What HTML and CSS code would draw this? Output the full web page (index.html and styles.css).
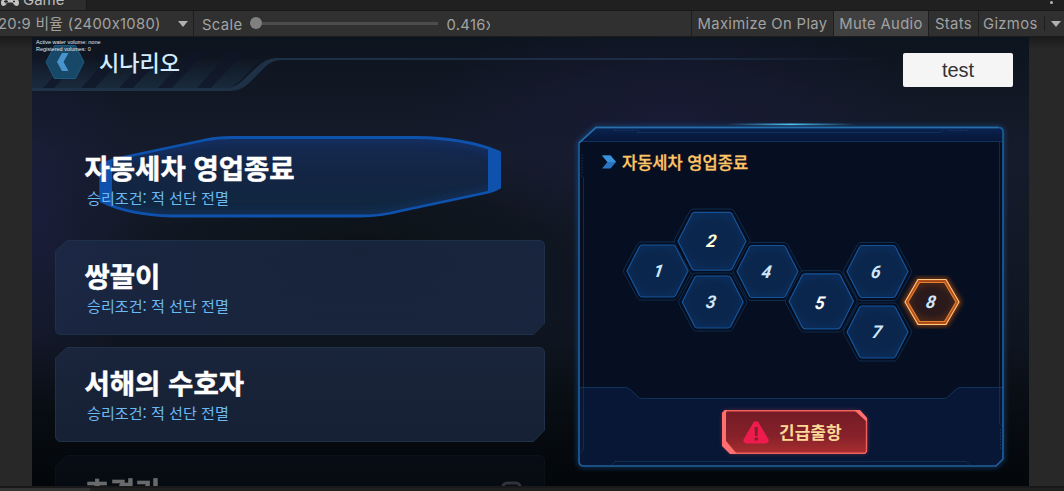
FILE: index.html
```html
<!DOCTYPE html>
<html lang="ko">
<head>
    <meta charset="UTF-8">
    <meta name="viewport" content="width=device-width, initial-scale=1.0">
    <title>시나리오</title>
    <link rel="stylesheet" href="styles.css">
</head>
<body>
    <div class="tabs">
        <div class="tab">
            <svg width="20" height="12" viewBox="0 0 20 12"><path d="M6 0h8c3 0 5 2 5 5s-3 4-5 1.500l-1.500-2h-5L6 6.500C4 9 1 8 1 5s2-5 5-5z" fill="#c4c4c4" transform="translate(0 -2)"/><path d="M4 1.500h4M6 0v3.500M13 1.500h2" stroke="#2d2d2d" stroke-width="1.300"/></svg>
            <span>Game</span>
        </div>
        <i class="kebab"></i>
    </div>

    <div class="toolbar">
        <div class="tool ratio"><span>20:9 비율 (2400x1080)</span><i class="arrow"></i></div>
        <div class="tool scale">
            <span>Scale</span>
            <div class="slider"><i class="knob"></i></div>
            <span class="value">0.416x</span>
        </div>
        <div class="tool maximize">Maximize On Play</div>
        <div class="tool mute">Mute Audio</div>
        <div class="tool stats">Stats</div>
        <div class="tool gizmos"><span>Gizmos</span><i class="split"></i><i class="arrow"></i></div>
    </div>

    <div class="viewport">
        <div class="game">
            <header class="header">
                <svg class="header-art" width="997" height="60" viewBox="32 37 997 60">
                    <defs>
                        <linearGradient id="band" x1="0" y1="0" x2="0" y2="1">
                            <stop offset="0.200" stop-color="#1b2f42" stop-opacity="0"/>
                            <stop offset="1" stop-color="#1b2f42" stop-opacity="0.800"/>
                        </linearGradient>
                        <linearGradient id="rail" gradientUnits="userSpaceOnUse" x1="32" y1="0" x2="892" y2="0">
                            <stop offset="0" stop-color="#1e3347"/>
                            <stop offset="0.750" stop-color="#1c2c45"/>
                            <stop offset="1" stop-color="#1c2c45" stop-opacity="0"/>
                        </linearGradient>
                    </defs>
                    <path d="M32 50H272L250 70Q236 88 225 88H32z" fill="url(#band)"/>
                    <path d="M43 88l33-36h11L54 88zM81 88l33-36h14L95 88zM119 88l33-36h14l-33 36zM158 88l33-36h14l-33 36zM197 88l33-36h14l-33 36z" fill="#101627" opacity=".7"/>
                    <path d="M32 88H224Q234 88 241 82L257 67Q266 58 277 58H892V60H281Q272 60 264 68L249 83Q241 91 229 91H32z" fill="url(#rail)"/>
                </svg>
                <div class="debug">Active water volume: none<br>Registered volumes: 0</div>
                <div class="title-row">
                    <svg class="back" width="40" height="36" viewBox="0 0 40 36">
                        <path d="M9.500 1.500h21L39 18l-8.500 16.500h-21L1 18z" fill="#184868" stroke="#1d5a80"/>
                        <path d="M17 9h6.500l-5 9 5 9H17l-5-9z" fill="#4994cc"/>
                    </svg>
                    <h1>시나리오</h1>
                    <button class="test">test</button>
                </div>
            </header>

            <main class="content">
                <section class="missions">
                    <article class="mission selected">
                        <svg class="frame" width="490" height="95" viewBox="55 132 490 95">
                            <defs>
                                <linearGradient id="sel" x1="0" y1="0" x2="0" y2="1">
                                    <stop offset="0" stop-color="#142a54"/>
                                    <stop offset="0.500" stop-color="#132543"/>
                                    <stop offset="1" stop-color="#10283f"/>
                                </linearGradient>
                                <filter id="soft" x="-5%" y="-10%" width="110%" height="120%"><feGaussianBlur stdDeviation="5"/></filter>
                                <clipPath id="selClip"><use href="#selShape"/></clipPath>
                                <path id="selShape" d="M101 165Q108 161 120 158L205 140Q216 137.500 232 137.500H415Q466 138 499 152V188Q495 191 480 194L400 211Q382 216 360 216H172Q128 215 101 201z"/>
                            </defs>
                            <use href="#selShape" fill="url(#sel)"/>
                            <g clip-path="url(#selClip)"><use href="#selShape" fill="none" stroke="#1448a0" stroke-width="7" opacity=".35" filter="url(#soft)"/></g>
                            <use href="#selShape" fill="none" stroke="#0f52ae" stroke-width="2.800"/>
                            <path d="M99.500 164l12.500-5v46l-12.500-6zM488 147l13 5V188l-13 5z" fill="#0f52ae"/>
                        </svg>
                        <div class="mission-text"><h2>자동세차 영업종료</h2><p>승리조건: 적 선단 전멸</p></div>
                    </article>
                    <article class="mission">
                        <svg class="frame" width="490" height="95" viewBox="0 0 490 95"><path class="card-shape" d="M12 .500H484Q489.500.500 489.500 6V83L478.500 94.500H6Q.500 94.500.500 89V11z"/></svg>
                        <div class="mission-text"><h2>쌍끌이</h2><p>승리조건: 적 선단 전멸</p></div>
                    </article>
                    <article class="mission">
                        <svg class="frame" width="490" height="95" viewBox="0 0 490 95"><path class="card-shape" d="M12 .500H484Q489.500.500 489.500 6V83L478.500 94.500H6Q.500 94.500.500 89V11z"/></svg>
                        <div class="mission-text"><h2>서해의 수호자</h2><p>승리조건: 적 선단 전멸</p></div>
                    </article>
                    <article class="mission faded">
                        <svg class="frame" width="490" height="95" viewBox="0 0 490 95">
                            <path class="card-shape" d="M12 .500H484Q489.500.500 489.500 6V83L478.500 94.500H6Q.500 94.500.500 89V11z"/>
                            <rect x="448" y="28" width="17" height="16" rx="4" fill="none" stroke="#77728a" stroke-width="3"/>
                        </svg>
                        <div class="mission-text"><h2>추격기</h2></div>
                    </article>
                </section>

                <section class="panel">
                    <svg class="frame" width="440" height="356" viewBox="571 117 440 356">
                        <defs>
                            <filter id="glow" x="-10%" y="-10%" width="120%" height="120%"><feGaussianBlur stdDeviation="2.500"/></filter>
                            <linearGradient id="head" x1="0" y1="0" x2="0" y2="1">
                                <stop offset="0" stop-color="#0a2350"/>
                                <stop offset="1" stop-color="#071638"/>
                            </linearGradient>
                            <linearGradient id="flare">
                                <stop offset="0" stop-color="#42b4ee" stop-opacity="0"/>
                                <stop offset="0.500" stop-color="#4fc2f5"/>
                                <stop offset="1" stop-color="#42b4ee" stop-opacity="0"/>
                            </linearGradient>
                            <path id="outline" d="M596 127.500H998Q1003 127.500 1003 132V459L996 466H584Q579 466 579 461V143z"/>
                        </defs>
                        <use href="#outline" fill="none" stroke="#1b61ac" stroke-width="4" opacity=".5" filter="url(#glow)"/>
                        <use href="#outline" fill="#060f21"/>
                        <path d="M596 128H998Q1002 128 1002 132V141H581z" fill="url(#head)"/>
                        <path d="M579 387H625Q628 387 631 390L637 396Q639 398.500 642 398.500H944Q947 398.500 949 396L955 390Q958 387 961 387H1003V459L996 466H584Q579 466 579 461z" fill="#071735"/>
                        <path d="M580 387.500H625Q628 387.500 631 390L637 396Q639 398.500 642 398.500H944Q947 398.500 949 396L955 390Q958 387.500 961 387.500H1002M581 141.500H1002" fill="none" stroke="#10315a"/>
                        <path d="M583.500 449V178l-3-3M999.500 142V423l3 3M583.500 449l-3 4M636 132.500H940l4-3M640 132.500l-4-3M612 465l3-3.500H966l4 3.500" fill="none" stroke="#12365f" opacity=".7"/>
                        <path d="M614 130.500H634M948 130.500H969M582 154V174M1000.500 429V449" stroke="#1b456f" stroke-dasharray="2 1" opacity=".55"/>
                        <use href="#outline" fill="none" stroke="#1f5f9c" stroke-width="1.600"/>
                        <path d="M579 143L596 127.500H998" fill="none" stroke="#2670ab" stroke-width="1.300"/>
                        <rect x="727" y="123.500" width="128" height="1.700" fill="url(#flare)"/>
                    </svg>
                    <div class="panel-body">
                        <div class="panel-title">
                            <svg width="14" height="14" viewBox="0 0 14 14"><path d="M0 .500h8.500L14 7l-5.500 6.500H0L5.500 7z" fill="#2a74c4"/><path d="M0 .500h8.500L14 7H5.500z" fill="#3a91dc"/></svg>
                            <h3>자동세차 영업종료</h3>
                        </div>
                        <svg class="map" width="424" height="200" viewBox="579 187 424 200">
                            <defs>
                                <symbol id="hex" viewBox="-35 -31 70 62" overflow="visible">
                                    <path d="M-16.500-29H16.500Q18.500-29 20-27L33.500-2Q34.500 0 33.500 2L20 27Q18.500 29 16.500 29H-16.500Q-18.500 29-20 27L-33.500 2Q-34.500 0-33.500-2L-20-27Q-18.500-29-16.500-29z" fill="#050e20" stroke="#0f2b4d" vector-effect="non-scaling-stroke"/>
                                    <path d="M-15.500-26H15.500Q17-26 18-24.500L30.500 0 18 24.500Q17 26 15.500 26H-15.500Q-17 26-18 24.500L-30.500 0-18-24.500Q-17-26-15.500-26z" fill="url(#cell)" stroke="#15549a" stroke-width="1.200" vector-effect="non-scaling-stroke"/>
                                </symbol>
                                <radialGradient id="cell">
                                    <stop offset="0.700" stop-color="#0a264c"/>
                                    <stop offset="1" stop-color="#0b2b57"/>
                                </radialGradient>
                                <radialGradient id="ember">
                                    <stop offset="0.600" stop-color="#2a1a1c"/>
                                    <stop offset="1" stop-color="#4e2816"/>
                                </radialGradient>
                            </defs>
                            <use href="#hex" x="622.500" y="240" width="70" height="62"/>
                            <use href="#hex" x="673" y="206.300" width="78" height="70"/>
                            <use href="#hex" x="677.700" y="271" width="70" height="62"/>
                            <use href="#hex" x="732.500" y="240.500" width="70" height="62"/>
                            <use href="#hex" x="784.300" y="268.300" width="74" height="66"/>
                            <use href="#hex" x="842.500" y="240.500" width="70" height="62"/>
                            <use href="#hex" x="842.500" y="301" width="70" height="62"/>
                            <g transform="translate(932 302)">
                                <path d="M-14-22H14L27 0 14 22H-14L-27 0z" fill="none" stroke="#e0600f" stroke-width="4" opacity=".7" filter="url(#glow)"/>
                                <path d="M-13.500-21.500H13.500L26 0 13.500 21.500H-13.500L-26 0z" fill="url(#ember)" stroke="#b8501a" stroke-width="2.500"/>
                                <path d="M-14-22.500H14L27 0 14 22.500H-14L-27 0z" fill="none" stroke="#ffc681" stroke-width="1.100"/>
                                <path d="M-12.500-19.500H12.500L24 0 12.500 19.500H-12.500L-24 0z" fill="none" stroke="#ea822f" stroke-width="1.200"/>
                            </g>
                            <g class="numbers">
                                <text transform="translate(657.500 277) skewX(-9)">1</text>
                                <text transform="translate(710.500 247) skewX(-9)" class="cream">2</text>
                                <text transform="translate(710 308) skewX(-9)">3</text>
                                <text transform="translate(765.500 278) skewX(-9)">4</text>
                                <text transform="translate(819 309) skewX(-9)" class="white">5</text>
                                <text transform="translate(875 278) skewX(-9)">6</text>
                                <text transform="translate(876 338) skewX(-9)">7</text>
                                <text transform="translate(930 308) skewX(-9)">8</text>
                            </g>
                        </svg>
                        <button class="launch">
                            <svg class="launch-art" width="161" height="60" viewBox="-8 -8 161 60">
                                <defs>
                                    <linearGradient id="red" x1="0" y1="0" x2="0" y2="1">
                                        <stop offset="0" stop-color="#741b25"/>
                                        <stop offset="0.600" stop-color="#86212a"/>
                                        <stop offset="1" stop-color="#a82e2e"/>
                                    </linearGradient>
                                </defs>
                                <path d="M3 1H137L145 9V41L143 43H9L1 35V3z" fill="#e44952" opacity=".5" filter="url(#glow)"/>
                                <path d="M3 .700H137L144.500 8.500V41.500L143 43.300H9L.700 35V3z" fill="url(#red)" stroke="#f0605c" stroke-width="1.400"/>
                                <path d="M0 3L3 0H5L4 3V31L15 44H8L0 36zM132 0H138L145 8V12z" fill="#ff6f70"/>
                            </svg>
                            <span class="launch-label">
                                <svg width="26" height="23" viewBox="0 0 26 23"><path d="M11 .500h4L25.500 18.500v2L23.500 22.500h-21L.500 20.500v-2z" fill="#ee1c4c"/><path d="M11.500 6h3.500l-.500 9h-2.500zM11.500 16.500h3.500v3h-3.500z" fill="#86212a"/></svg>
                                긴급출항
                            </span>
                        </button>
                    </div>
                </section>
            </main>
        </div>
    </div>
    <div class="bottom"></div>
</body>
</html>
```

FILE: styles.css
```css
* {
    box-sizing: border-box;
}
body {
    margin: 0;
    width: 1064px;
    height: 491px;
    overflow: hidden;
    display: flex;
    flex-direction: column;
    background: #282828;
    font-family: Inter, "Noto Sans CJK KR", sans-serif;
}
h1, h2, h3, p {
    margin: 0;
}
svg {
    display: block;
    flex: none;
}
button {
    border: none;
    padding: 0;
    cursor: pointer;
}

/* editor chrome */
.tabs {
    flex: none;
    height: 11px;
    display: flex;
    justify-content: space-between;
    background: #202020;
    border-bottom: 1px solid #191919;
    overflow: hidden;
}
.tab {
    display: flex;
    width: 87px;
    height: 11px;
    gap: 3px;
    background: #2d2d2d;
    border-right: 1px solid #191919;
    color: #bdbdbd;
    font-size: 15px;
    line-height: 20px;
}
.tab span {
    margin-top: -10px;
}
.kebab {
    width: 3px;
    height: 3px;
    margin: 1px 11px 0 0;
    border-radius: 50%;
    background: #b5b5b5;
}
.toolbar {
    flex: none;
    height: 26px;
    display: flex;
    background: #303030;
    border-bottom: 1px solid #1c1c1c;
    color: #a2a2a2;
    font-size: 14.800px;
    line-height: 26px;
    letter-spacing: .35px;
    white-space: nowrap;
}
.tool {
    flex: none;
    border-right: 1px solid #1e1e1e;
    text-align: center;
}
.ratio {
    display: flex;
    align-items: center;
    justify-content: space-between;
    width: 194px;
    padding-right: 5px;
    letter-spacing: .3px;
}
.ratio span {
    margin-left: -2px;
}
.arrow {
    border: 5px solid transparent;
    border-top: 6px solid #b0b0b0;
    border-bottom: 0;
}
.scale {
    display: flex;
    align-items: center;
    width: 498px;
    padding: 3px 0 0 8px;
}
.slider {
    width: 188px;
    height: 3px;
    margin: -3px 8px 0 8px;
    background: #4c4c4c;
}
.knob {
    display: block;
    width: 12px;
    height: 12px;
    margin-top: -5px;
    border-radius: 50%;
    background: #808080;
}
.value {
    width: 44px;
    overflow: hidden;
}
.maximize { width: 142px; }
.mute {
    width: 95px;
    background: #404040;
}
.stats { width: 50px; }
.gizmos {
    flex: 1;
    display: flex;
    align-items: center;
    justify-content: space-between;
    padding: 0 3px 0 4px;
    border: none;
}
.split {
    width: 1px;
    height: 15px;
    background: #1e1e1e;
}

/* game view */
.viewport {
    flex: none;
    height: 449px;
    padding: 0 35px 0 32px;
    background: linear-gradient(#1b1b1b, #282828 12px);
}
.game {
    display: flex;
    flex-direction: column;
    height: 449px;
    overflow: hidden;
    background:
        linear-gradient(transparent 68%, rgba(2, 5, 8, .85)),
        radial-gradient(ellipse 260px 120px at 640px 85px, rgba(27, 28, 60, .65), transparent),
        radial-gradient(ellipse 110px 200px at 0 180px, rgba(29, 31, 66, .7), transparent),
        radial-gradient(ellipse 260px 110px at 330px 215px, rgba(10, 17, 20, .9), transparent),
        linear-gradient(#0d141e, #151b2a 25%, #101622 60%, #0a1015);
    font-family: "Noto Sans CJK KR", sans-serif;
}
.header {
    flex: none;
    height: 95px;
    display: grid;
}
.header > * {
    grid-area: 1 / 1;
}
.debug {
    z-index: 1;
    padding: 2px 0 0 4px;
    color: #e6e6e6;
    font: 5.500px/6.500px "Liberation Sans", sans-serif;
}
.title-row {
    display: flex;
    align-items: flex-start;
    padding: 7px 16px 0 13px;
}
.title-row h1 {
    margin: 1px auto 0 14px;
    color: #d3edff;
    font-size: 22px;
    line-height: 32px;
    font-weight: 500;
}
.test {
    width: 110px;
    height: 34px;
    margin-top: 9px;
    border-radius: 2px;
    background: #f5f5f5;
    color: #323232;
    font: 20px "Liberation Sans", sans-serif;
}
.content {
    display: flex;
    gap: 26px;
    padding-left: 23px;
}
.missions {
    display: flex;
    flex-direction: column;
    gap: 12.500px;
    width: 490px;
}
.mission {
    flex: none;
    display: grid;
    height: 95px;
}
.mission > * {
    grid-area: 1 / 1;
}
.card-shape {
    fill: rgba(31, 46, 78, .65);
    stroke: #1f3148;
}
.mission-text {
    padding: 16px 0 0 29.500px;
}
.mission h2 {
    color: #fff;
    font-size: 27.500px;
    line-height: 38px;
    font-weight: 700;
    -webkit-text-stroke: .5px #fff;
}
.mission p {
    padding: 1px 0 0 2.500px;
    color: #6db9f2;
    font-size: 15.100px;
    line-height: 20px;
}
.mission:nth-child(3) .card-shape {
    fill: rgba(33, 48, 78, .6);
}
.faded {
    opacity: .4;
}
.faded .card-shape {
    fill: rgba(31, 46, 78, .3);
    stroke: #14202c;
}

/* stage panel */
.panel {
    display: grid;
    width: 440px;
    margin-top: -15px;
}
.panel > * {
    grid-area: 1 / 1;
}
.panel-body {
    display: flex;
    flex-direction: column;
    align-items: center;
    padding: 32px 8px 0;
}
.panel-title {
    align-self: stretch;
    display: flex;
    align-items: center;
    gap: 6px;
    height: 26px;
    padding-left: 23px;
}
.panel-title h3 {
    color: #ffc665;
    font-size: 16.500px;
    line-height: 26px;
    font-weight: 500;
    -webkit-text-stroke: .3px #ffc665;
}
.map {
    margin-top: 12px;
}
.numbers {
    fill: #cfe6fb;
    font: italic 700 17.500px Roboto, sans-serif;
    text-anchor: middle;
}
.cream { fill: #fdffd8; }
.white { fill: #fff; }
.launch {
    display: grid;
    width: 145px;
    height: 44px;
    margin: 23px 0 0 7px;
    background: none;
    color: #fcd997;
    font: 700 17px/24px "Noto Sans CJK KR", sans-serif;
}
.launch > * {
    grid-area: 1 / 1;
}
.launch-art {
    margin: -8px;
}
.launch-label {
    z-index: 1;
    display: flex;
    align-items: center;
    gap: 10px;
    height: 44px;
    padding-left: 21px;
}
.bottom {
    flex: 1;
    background: linear-gradient(90deg, #333 90px, #202020 90px);
    border-top: 2px solid #191919;
}
```
